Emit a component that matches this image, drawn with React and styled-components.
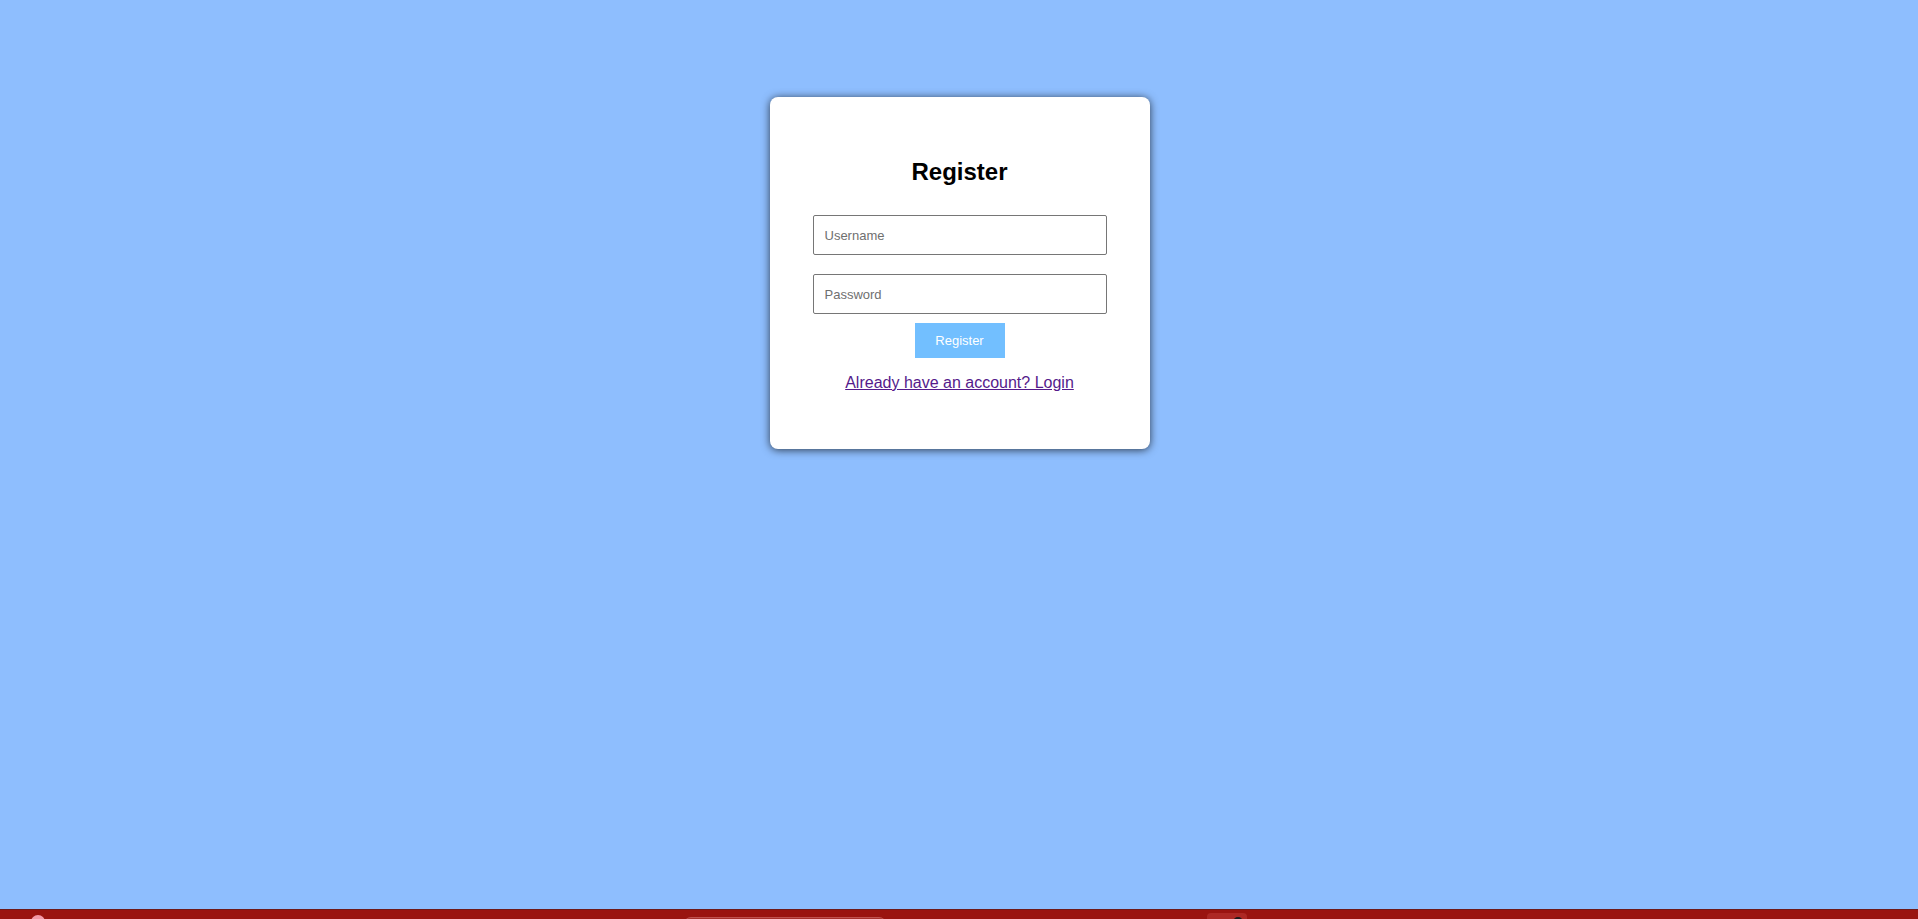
import React from 'react';
import styled, { createGlobalStyle } from 'styled-components';

const GlobalStyle = createGlobalStyle`
  html, body {
    margin: 0;
    padding: 0;
    background: #8ebefe;
    font-family: "Liberation Sans", Arial, sans-serif;
  }
`;

const Page = styled.div`
  height: 919px;
  display: flex;
  flex-direction: column;
  overflow: hidden;
`;

const Main = styled.main`
  flex: 1;
  display: flex;
  justify-content: center;
  align-items: flex-start;
  padding-top: 97px;
  padding-left: 1px;
`;

const Card = styled.div`
  width: 380px;
  box-sizing: border-box;
  padding: 40px 43px 41px;
  background: #fff;
  border-radius: 8px;
  box-shadow: 0 1px 9px rgba(0, 0, 0, 0.7);
  text-align: center;
`;

const Title = styled.h2`
  margin: 21px 0 29px;
  font-size: 24px;
  font-weight: bold;
  color: #000;
`;

const Form = styled.form`
  display: flex;
  flex-direction: column;
  align-items: center;
`;

const Input = styled.input`
  width: 294px;
  height: 40px;
  box-sizing: border-box;
  margin-bottom: ${p => p.$gap}px;
  padding: 0 11px;
  border: 1px solid #767676;
  border-radius: 2px;
  font-family: "Liberation Sans", Arial, sans-serif;
  font-size: 13px;
  color: #000;
  &::placeholder {
    color: #6f6f6f;
  }
`;

const Button = styled.button`
  width: 90px;
  height: 35px;
  border: none;
  background: #72bfff;
  color: #fff;
  font-family: "Liberation Sans", Arial, sans-serif;
  font-size: 13px;
  cursor: pointer;
`;

const Switch = styled.p`
  margin: 16px 0 16px;
  font-size: 16px;
  a {
    color: #551a8b;
    text-decoration: underline;
  }
`;

const Taskbar = styled.footer`
  height: 10px;
  flex-shrink: 0;
  background: #9a1410;
  border-top: 1px solid #6e1a1a;
  box-sizing: border-box;
  display: flex;
  align-items: flex-start;
  overflow: hidden;
`;

const StartDot = styled.div`
  width: 14px;
  height: 14px;
  margin: 5px 0 0 31px;
  border-radius: 50%;
  background: #f39aa8;
`;

const SearchBox = styled.div`
  width: 202px;
  height: 14px;
  margin: 7px 0 0 639px;
  border-radius: 7px;
  background: #a8302c;
  border-top: 1px solid #c0524f;
`;

const AppTile = styled.div`
  width: 40px;
  height: 14px;
  margin: 3px 0 0 321px;
  border-radius: 4px;
  background: #ad2824;
  display: flex;
  justify-content: flex-end;
  padding-right: 4px;
  box-sizing: border-box;
`;

const AppIcon = styled.div`
  width: 10px;
  height: 10px;
  margin-top: 4px;
  border-radius: 50%;
  background: #1b1b1b;
`;

export default function App() {
  return (
    <Page>
      <GlobalStyle />
      <Main>
        <Card>
          <Title>Register</Title>
          <Form onSubmit={e => e.preventDefault()}>
            <Input type="text" placeholder="Username" $gap={19} />
            <Input type="password" placeholder="Password" $gap={9} />
            <Button type="submit">Register</Button>
          </Form>
          <Switch>
            <a href="#login">Already have an account? Login</a>
          </Switch>
        </Card>
      </Main>
      <Taskbar>
        <StartDot />
        <SearchBox />
        <AppTile>
          <AppIcon />
        </AppTile>
      </Taskbar>
    </Page>
  );
}
